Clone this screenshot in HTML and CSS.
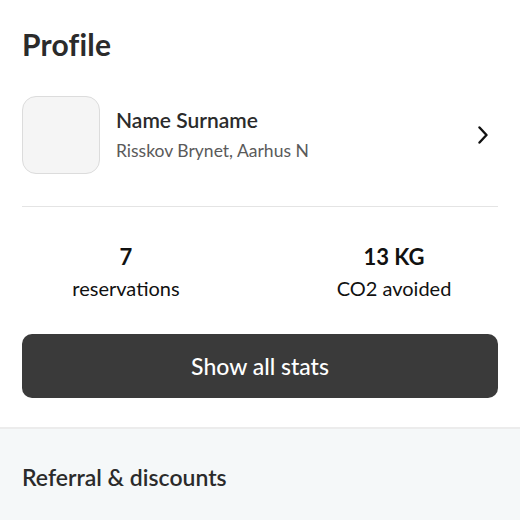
FILE: index.html
```html
<!DOCTYPE html>
<html>
<head>
<meta charset="utf-8">
<link rel="stylesheet" href="styles.css">
</head>
<body>
<main class="page">
  <section class="profile">
    <h1 class="title">Profile</h1>
    <div class="user-row">
      <div class="avatar"></div>
      <div class="user-info">
        <div class="user-name">Name Surname</div>
        <div class="user-location">Risskov Brynet, Aarhus N</div>
      </div>
      <svg class="chevron" width="12" height="18" viewBox="0 0 12 18" fill="none">
        <path d="M2.5 1.5 L9.5 9 L2.5 16.5" stroke="#111" stroke-width="2.4" stroke-linecap="round" stroke-linejoin="round"/>
      </svg>
    </div>
    <div class="divider"></div>
    <div class="stats">
      <div class="stat">
        <div class="stat-value">7</div>
        <div class="stat-label">reservations</div>
      </div>
      <div class="stat">
        <div class="stat-value">13 KG</div>
        <div class="stat-label">CO2 avoided</div>
      </div>
    </div>
    <button class="stats-btn">Show all stats</button>
  </section>
  <section class="referral">
    <h2 class="referral-title">Referral &amp; discounts</h2>
  </section>
</main>
</body>
</html>
```
FILE: styles.css
```css
* { box-sizing: border-box; }
html, body { margin: 0; padding: 0; background: #fff; }
body {
  font-family: Lato, "Open Sans", sans-serif;
  color: #2b2b2b;
  width: 520px;
  height: 520px;
  overflow: hidden;
}
.page { display: flex; flex-direction: column; }
.profile {
  padding: 24px 22px 29px;
  display: flex;
  flex-direction: column;
}
.title {
  margin: 0;
  font-size: 30px;
  font-weight: 700;
  line-height: 40px;
  color: #2b2b2b;
  letter-spacing: 0.2px;
}
.user-row {
  margin-top: 32px;
  display: flex;
  align-items: center;
  gap: 16px;
}
.avatar {
  width: 78px;
  height: 78px;
  border-radius: 14px;
  background: #f5f5f5;
  border: 1px solid #dcdcdc;
  flex: none;
}
.user-info { flex: 1; display: flex; flex-direction: column; gap: 8px; margin-top: -1px; }
.user-name { font-size: 21px; font-weight: 600; line-height: 24px; color: #2b2b2b; }
.user-location { font-size: 17.5px; line-height: 21px; color: #5a5a5a; }
.chevron { margin-right: 9px; flex: none; }
.divider { height: 1px; background: #e4e4e4; margin-top: 32px; }
.stats {
  display: grid;
  grid-template-columns: 1fr 1fr;
  column-gap: 60px;
  margin-top: 37px;
}
.stat { display: flex; flex-direction: column; align-items: center; }
.stat-value { font-size: 22px; font-weight: 700; line-height: 26px; color: #111; }
.stat-label { font-size: 20px; line-height: 24px; color: #111; margin-top: 6px; }
.stats-btn {
  margin-top: 34px;
  height: 64px;
  border: none;
  border-radius: 10px;
  background: #3a3a3a;
  color: #fff;
  font-family: inherit;
  font-size: 23px;
  font-weight: 500;
}
.referral {
  border-top: 2px solid #ececec;
  background: #f5f8f9;
  padding: 34px 22px 40px;
}
.referral-title {
  margin: 0;
  font-size: 23px;
  font-weight: 600;
  line-height: 28px;
  color: #2b2b2b;
}
```
